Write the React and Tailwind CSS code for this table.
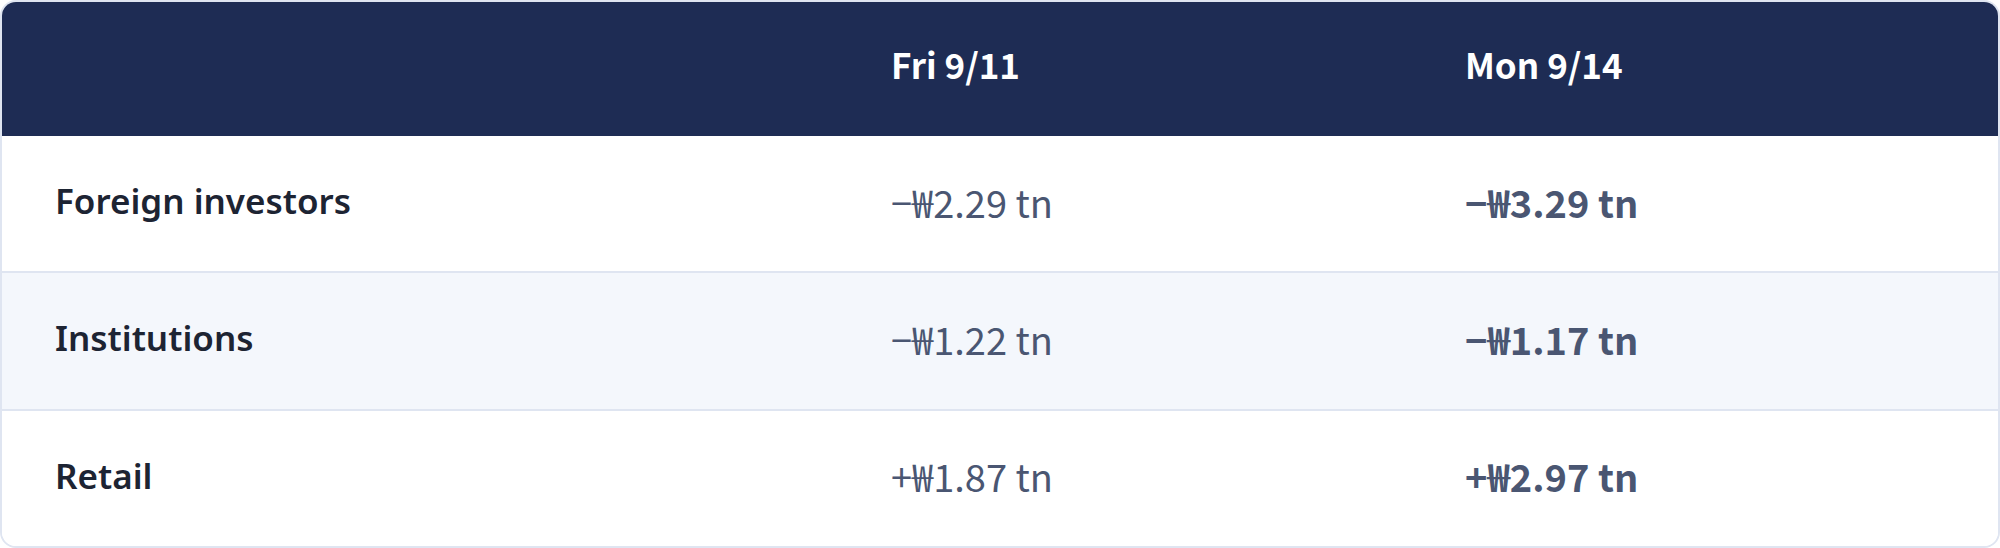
import React from 'react';

const rows = [
  { label: 'Foreign investors', fri: '−₩2.29 tn', mon: '−₩3.29 tn' },
  { label: 'Institutions', fri: '−₩1.22 tn', mon: '−₩1.17 tn' },
  { label: 'Retail', fri: '+₩1.87 tn', mon: '+₩2.97 tn' },
];

const cjk = "font-['Noto_Sans_CJK_KR',sans-serif]";

export default function App() {
  return (
    <div className="w-[2000px] h-[548px] bg-white">
      <div className="h-full border-2 border-[#dfe5f1] rounded-2xl overflow-hidden flex flex-col">
        <div className="grid grid-cols-[836px_574px_1fr] h-[134px] pb-[10px] bg-[#1e2c54] items-center">
          <div />
          <div className={`${cjk} pl-[53px] text-[35px] font-bold text-white`}>Fri 9/11</div>
          <div className={`${cjk} pl-[53px] text-[35px] font-bold text-white`}>Mon 9/14</div>
        </div>
        {rows.map((row, i) => (
          <div
            key={row.label}
            className={`grid grid-cols-[836px_574px_1fr] items-center flex-1 pb-[5px] ${
              i % 2 === 1 ? 'bg-[#f4f7fc]' : 'bg-white'
            } ${i < rows.length - 1 ? 'border-b-2 border-[#dfe5f1]' : ''}`}
          >
            <div className="pl-[53px] font-['Noto_Sans',sans-serif] text-[35px] font-semibold text-[#1d2433]">
              {row.label}
            </div>
            <div className={`${cjk} pl-[53px] text-[38px] text-[#4a5672]`}>{row.fri}</div>
            <div className={`${cjk} pl-[53px] text-[38px] font-bold text-[#4a5672]`}>{row.mon}</div>
          </div>
        ))}
      </div>
    </div>
  );
}
